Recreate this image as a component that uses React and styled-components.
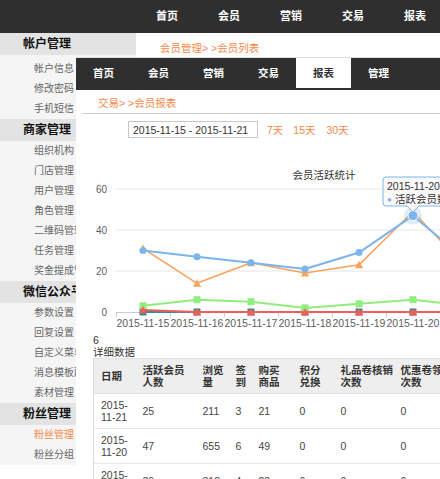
import React from 'react';
import styled, { createGlobalStyle } from 'styled-components';

const ORANGE = '#f5894a';
const FONT = '"Liberation Sans", "Noto Sans CJK SC", sans-serif';

const Global = createGlobalStyle`
  html, body { margin: 0; padding: 0; background: #fff; }
  body { font-family: ${FONT}; }
  * { box-sizing: border-box; }
`;

const Page = styled.div`
  position: relative;
  width: 440px;
  height: 479px;
  overflow: hidden;
  background: #fff;
`;

const TopBar = styled.nav`
  height: 33px;
  background: #2f2f2f;
  display: flex;
  padding-left: 136px;
`;

const TopItem = styled.div`
  width: 62px;
  flex: none;
  text-align: center;
  line-height: 33px;
  color: #fff;
  font-size: 11px;
  font-weight: bold;
`;

const Body = styled.div`
  display: flex;
`;

const Sidebar = styled.aside`
  width: 136px;
  flex: none;
`;

const GroupTitle = styled.div`
  height: 22px;
  line-height: 22px;
  background: #e3e3e3;
  padding-left: 23px;
  font-size: 12px;
  font-weight: bold;
  color: #111;
  white-space: nowrap;
`;

const GroupList = styled.ul`
  margin: 0;
  padding: ${p => (p.$first ? '4px 0 0' : '0')};
  list-style: none;
  background: #f5f5f5;
`;

const SideItem = styled.li`
  height: 20px;
  line-height: 20px;
  padding-left: 34px;
  font-size: 10px;
  color: ${p => (p.$active ? ORANGE : '#666')};
  white-space: nowrap;
`;

const Main = styled.main`
  flex: 1;
  padding: 9px 0 0 24px;
`;

const Crumb = styled.div`
  font-size: 10.5px;
  line-height: 12px;
  color: ${ORANGE};
  white-space: nowrap;
`;

const Frame = styled.section`
  position: absolute;
  left: 76px;
  top: 57px;
  right: 0;
  bottom: 0;
  background: #fff;
  border-top: 1px solid #dcdcdc;
  overflow: hidden;
`;

const SubNav = styled.nav`
  height: 32px;
  background: #2f2f2f;
  display: flex;
  align-items: flex-start;
`;

const SubItem = styled.div`
  width: 55px;
  flex: none;
  height: 30px;
  line-height: 30px;
  text-align: center;
  font-size: 10.5px;
  font-weight: bold;
  color: ${p => (p.$active ? '#333' : '#fff')};
  background: ${p => (p.$active ? '#fff' : 'transparent')};
`;

const SubCrumb = styled.div`
  margin-left: 6px;
  padding: 7px 0 4px 16px;
  font-size: 10.5px;
  line-height: 12px;
  color: ${ORANGE};
  border-bottom: 1px solid #d0d0d0;
  white-space: nowrap;
`;

const DateRow = styled.div`
  display: flex;
  align-items: center;
  margin-top: 7px;
  padding-left: 52px;
  height: 17px;
`;

const DateInput = styled.input`
  width: 130px;
  height: 17px;
  border: 1px solid #c8c8c8;
  padding: 0 0 0 4px;
  font-family: ${FONT};
  font-size: 10.5px;
  color: #333;
  outline: none;
  background: #fff;
`;

const RangeLink = styled.span`
  margin-left: ${p => p.$gap}px;
  font-size: 10.5px;
  color: ${ORANGE};
  white-space: nowrap;
`;

const ChartSvg = styled.svg`
  display: block;
  margin-top: 20px;
  font-family: ${FONT};
  overflow: visible;
`;

const Note = styled.div`
  padding-left: 17px;
  font-size: 10.5px;
  line-height: 12px;
  color: #333;
  white-space: nowrap;
`;

const Table = styled.table`
  margin-left: 17px;
  border-collapse: collapse;
  table-layout: fixed;
  width: 430px;
  border-left: 1px solid #dcdcdc;
  border-top: 1px solid #e2e2e2;
  font-size: 10.5px;
`;

const Th = styled.th`
  background: #eee;
  padding: 5px 7px;
  line-height: 12px;
  text-align: left;
  font-weight: bold;
  color: #333;
  white-space: nowrap;
  border-bottom: 1px solid #e2e2e2;
`;

const Td = styled.td`
  padding: 5px 7px;
  line-height: 12px;
  color: #444;
  white-space: nowrap;
  border-bottom: 1px solid #e6e6e6;
`;

const topNav = ['首页', '会员', '营销', '交易', '报表'];
const subNav = ['首页', '会员', '营销', '交易', '报表', '管理'];

const groups = [
  { title: '帐户管理', items: ['帐户信息', '修改密码', '手机短信'] },
  { title: '商家管理', items: ['组织机构', '门店管理', '用户管理', '角色管理', '二维码管理', '任务管理', '奖金提成管理'] },
  { title: '微信公众平台', items: ['参数设置', '回复设置', '自定义菜单', '消息模板配置', '素材管理'] },
  { title: '粉丝管理', items: ['粉丝管理', '粉丝分组'], active: '粉丝管理' },
];

const cats = ['2015-11-15', '2015-11-16', '2015-11-17', '2015-11-18', '2015-11-19', '2015-11-20', '2015-11-21'];
const cx = i => 67 + i * 54;
const vy = v => 154 - 2.05 * v;

const series = [
  { color: '#2b908f', data: [0, 0, 0, 0, 0, 0, 0], marker: 'square', width: 2 },
  { color: '#90ed7d', data: [3, 6, 5, 2, 4, 6, 3], marker: 'square', width: 2 },
  { color: '#f7a35c', data: [31, 14, 24, 19, 23, 49, 21], marker: 'triangle', width: 1.5 },
  { color: '#7cb5ec', data: [30, 27, 24, 21, 29, 47, 25], marker: 'circle', width: 2 },
  { color: '#f45b5b', data: [1, 0, 0, 0, 0, 0, 0], marker: 'triangle', width: 2 },
];

function Marker({ type, x, y, color }) {
  if (type === 'circle') return <circle cx={x} cy={y} r={3.5} fill={color} />;
  if (type === 'square') return <rect x={x - 3.5} y={y - 3.5} width={7} height={7} fill={color} />;
  return <path d={`M${x} ${y - 4} L${x + 4} ${y + 3.5} L${x - 4} ${y + 3.5} Z`} fill={color} />;
}

function Chart() {
  const grid = [60, 40, 20];
  return (
    <ChartSvg width="440" height="176" viewBox="0 0 440 176">
      <text x="248" y="21" textAnchor="middle" fontSize="10.5" fill="#333">会员活跃统计</text>
      {grid.map(v => (
        <line key={v} x1="40" x2="520" y1={vy(v)} y2={vy(v)} stroke="#e6e6e6" strokeWidth="1" />
      ))}
      {[60, 40, 20, 0].map(v => (
        <text key={v} x="31" y={vy(v) + 4} textAnchor="end" fontSize="10" fill="#606060">{v}</text>
      ))}
      <line x1="40" x2="520" y1="154.5" y2="154.5" stroke="#c0d0e0" strokeWidth="1" />
      {Array.from({ length: 8 }).map((_, i) => (
        <line key={i} x1={40.5 + i * 54} x2={40.5 + i * 54} y1="154" y2="159" stroke="#c0d0e0" strokeWidth="1" />
      ))}
      {cats.map((c, i) => (
        <text key={c} x={cx(i)} y="169" textAnchor="middle" fontSize="10.5" fill="#606060">{c}</text>
      ))}
      {series.map((s, si) => (
        <g key={si}>
          <polyline
            points={s.data.map((v, i) => `${cx(i)},${vy(v)}`).join(' ')}
            fill="none"
            stroke={s.color}
            strokeWidth={s.width}
            strokeLinejoin="round"
          />
          {s.data.map((v, i) => (
            <Marker key={i} type={s.marker} x={cx(i)} y={vy(v)} color={s.color} />
          ))}
        </g>
      ))}
      <circle cx={cx(5)} cy={vy(47)} r="9" fill="#7cb5ec" opacity="0.25" />
      <circle cx={cx(5)} cy={vy(47)} r="5" fill="#7cb5ec" stroke="#fff" strokeWidth="1" />
      <path
        d="M310 19 L480 19 L480 48 L343 48 L337 54 L331 48 L310 48 Q307 48 307 45 L307 22 Q307 19 310 19 Z"
        fill="rgba(249,249,249,0.92)"
        stroke="#7cb5ec"
        strokeWidth="1"
      />
      <text x="311" y="32" fontSize="10.5" fill="#333">2015-11-20</text>
      <text x="311" y="44" fontSize="8" fill="#7cb5ec">●</text>
      <text x="319" y="44.5" fontSize="10.5" fill="#333">活跃会员数: 47</text>
    </ChartSvg>
  );
}

const cols = [42, 60, 33, 23, 41, 41, 60, 130];
const headers = [['日期'], ['活跃会员', '人数'], ['浏览', '量'], ['签', '到'], ['购买', '商品'], ['积分', '兑换'], ['礼品卷核销', '次数'], ['优惠卷领取', '次数']];
const rows = [
  ['2015-11-21', 25, 211, 3, 21, 0, 0, 0],
  ['2015-11-20', 47, 655, 6, 49, 0, 0, 0],
  ['2015-11-19', 29, 318, 4, 23, 0, 0, 0],
];

function Lines({ parts }) {
  return parts.map((p, i) => (
    <React.Fragment key={i}>
      {i > 0 && <br />}
      {p}
    </React.Fragment>
  ));
}

export default function App() {
  return (
    <Page>
      <Global />
      <TopBar>
        {topNav.map(t => <TopItem key={t}>{t}</TopItem>)}
      </TopBar>
      <Body>
        <Sidebar>
          {groups.map((g, gi) => (
            <React.Fragment key={g.title}>
              <GroupTitle>{g.title}</GroupTitle>
              <GroupList $first={gi === 0}>
                {g.items.map(it => (
                  <SideItem key={it} $active={g.active === it}>{it}</SideItem>
                ))}
              </GroupList>
            </React.Fragment>
          ))}
        </Sidebar>
        <Main>
          <Crumb>会员管理&gt; &gt;会员列表</Crumb>
        </Main>
      </Body>

      <Frame>
        <SubNav>
          {subNav.map(t => <SubItem key={t} $active={t === '报表'}>{t}</SubItem>)}
        </SubNav>
        <SubCrumb>交易&gt; &gt;会员报表</SubCrumb>
        <DateRow>
          <DateInput readOnly value="2015-11-15 - 2015-11-21" />
          <RangeLink $gap={9}>7天</RangeLink>
          <RangeLink $gap={10}>15天</RangeLink>
          <RangeLink $gap={11}>30天</RangeLink>
        </DateRow>
        <Chart />
        <Note>6</Note>
        <Note>详细数据</Note>
        <Table>
          <colgroup>
            {cols.map((w, i) => <col key={i} style={{ width: w }} />)}
          </colgroup>
          <thead>
            <tr>
              {headers.map((h, i) => <Th key={i}><Lines parts={h} /></Th>)}
            </tr>
          </thead>
          <tbody>
            {rows.map(r => (
              <tr key={r[0]}>
                <Td><Lines parts={[r[0].slice(0, 5), r[0].slice(5)]} /></Td>
                {r.slice(1).map((v, i) => <Td key={i}>{v}</Td>)}
              </tr>
            ))}
          </tbody>
        </Table>
      </Frame>
    </Page>
  );
}
